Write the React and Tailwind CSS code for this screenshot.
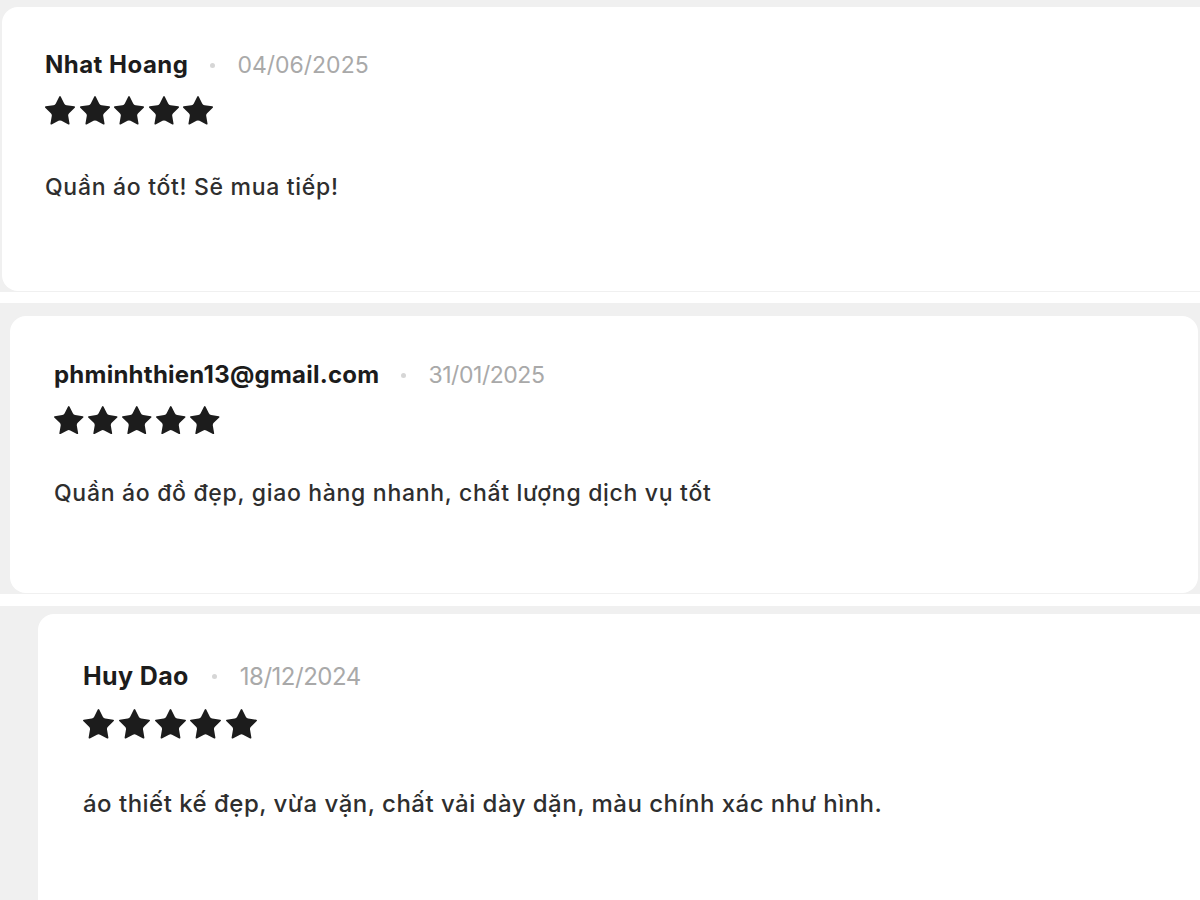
import React from "react";

function Star({ size }) {
  return (
    <svg width={size} height={size * 0.955} viewBox="2 2 20 19.1" fill="#1c1c1c">
      <path d="M11.525 2.295a.53.53 0 0 1 .95 0l2.31 4.679a2.123 2.123 0 0 0 1.595 1.16l5.166.756a.53.53 0 0 1 .294.904l-3.736 3.638a2.123 2.123 0 0 0-.611 1.878l.882 5.14a.53.53 0 0 1-.771.56l-4.618-2.428a2.122 2.122 0 0 0-1.973 0L6.396 21.01a.53.53 0 0 1-.77-.56l.881-5.139a2.122 2.122 0 0 0-.611-1.879L2.16 9.795a.53.53 0 0 1 .294-.906l5.165-.755a2.122 2.122 0 0 0 1.597-1.16z" />
    </svg>
  );
}

function Stars({ size, className }) {
  return (
    <div className={"flex " + className}>
      {[0, 1, 2, 3, 4].map((i) => (
        <Star key={i} size={size} />
      ))}
    </div>
  );
}

export default function App() {
  return (
    <div className="w-[1200px] h-[900px] overflow-hidden bg-white font-['Inter',sans-serif]">
      {/* review 1 */}
      <div className="bg-[#f0f0f0] pt-[7px] pb-[1px] pl-[2px]">
        <div className="w-[1230px] h-[284px] bg-white rounded-2xl pl-[43px] pt-[46px]">
          <div className="flex items-center leading-[24px]">
            <span className="font-bold text-[24px] tracking-[0.02em] text-[#1c1c1c]">Nhat Hoang</span>
            <span className="w-[5px] h-[5px] rounded-full bg-[#d6d6d6] mx-[22px]"></span>
            <span className="text-[23px] text-[#a9a9a9]">04/06/2025</span>
          </div>
          <Stars size={30} className="mt-[19px] gap-[4.5px]" />
          <p className="mt-[50px] text-[23px] leading-[24px] font-medium text-[#2e2e2e] tracking-[0.03em]">
            Quần áo tốt! Sẽ mua tiếp!
          </p>
        </div>
      </div>
      <div className="h-[11px]"></div>

      {/* review 2 */}
      <div className="bg-[#f0f0f0] pt-[13px] pb-[1px] pl-[10px] pr-[2px]">
        <div className="h-[277px] bg-white rounded-2xl pl-[44px] pt-[47px]">
          <div className="flex items-center leading-[24px]">
            <span className="font-bold text-[24px] tracking-[0.01em] text-[#1c1c1c]">phminhthien13@gmail.com</span>
            <span className="w-[5px] h-[5px] rounded-full bg-[#d6d6d6] mx-[22px]"></span>
            <span className="text-[23px] tracking-[-0.02em] text-[#a9a9a9]">31/01/2025</span>
          </div>
          <Stars size={29.5} className="mt-[19px] gap-[4.6px]" />
          <p className="mt-[47px] text-[23px] leading-[24px] font-medium text-[#2e2e2e] tracking-[0.03em]">
            Quần áo đồ đẹp, giao hàng nhanh, chất lượng dịch vụ tốt
          </p>
        </div>
      </div>
      <div className="h-[12px]"></div>

      {/* review 3 */}
      <div className="bg-[#f0f0f0] pt-[8px] pl-[38px] h-[300px]">
        <div className="w-[1200px] h-[320px] bg-white rounded-2xl pl-[45px] pt-[50px]">
          <div className="flex items-center leading-[25px]">
            <span className="font-bold text-[25px] tracking-[0.015em] text-[#1c1c1c]">Huy Dao</span>
            <span className="w-[5px] h-[5px] rounded-full bg-[#d6d6d6] mx-[23px]"></span>
            <span className="text-[24px] tracking-[-0.02em] text-[#a9a9a9]">18/12/2024</span>
          </div>
          <Stars size={31} className="mt-[20px] gap-[4.8px]" />
          <p className="mt-[52px] text-[24px] leading-[25px] font-medium text-[#2e2e2e] tracking-[0.02em]">
            áo thiết kế đẹp, vừa vặn, chất vải dày dặn, màu chính xác như hình.
          </p>
        </div>
      </div>
    </div>
  );
}
